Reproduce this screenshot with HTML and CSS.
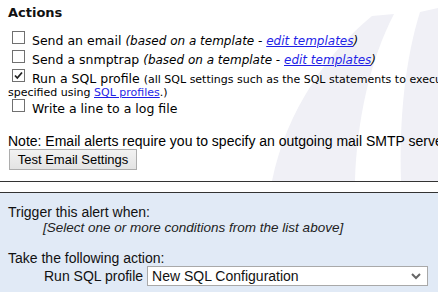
FILE: index.html
```html
<!DOCTYPE html>
<html lang="en">
<head>
    <meta charset="UTF-8">
    <title>Alert Actions</title>
    <link rel="stylesheet" href="styles.css">
</head>
<body>
    <div class="top">
        <svg class="watermark" width="438" height="181" viewBox="0 0 438 181">
            <path d="M372 16 C330 50 286 110 272 181 L355 181 C357 120 370 60 394 14 Z" fill="#f0f0f6"/>
            <path d="M420 12 C405 60 399 120 401 181 L438 181 L438 8 Z" fill="#f0f0f6"/>
        </svg>
        <div class="content">
            <h3 class="title">Actions</h3>
            <div class="opt"><span class="cb"></span> Send an email <em>(based on a template - <a href="#">edit templates</a>)</em></div>
            <div class="opt"><span class="cb"></span> Send a snmptrap <em>(based on a template - <a href="#">edit templates</a>)</em></div>
            <div class="opt opt-wrap"><span class="cb"><svg width="11" height="11" viewBox="0 0 11 11"><path d="M2 5.5 L4.3 8 L9 2.5" fill="none" stroke="#222" stroke-width="1.8"/></svg></span> Run a SQL profile <span class="small">(all SQL settings such as the SQL statements to execute are<br>specified using <a href="#">SQL profiles</a>.)</span></div>
            <div class="opt"><span class="cb"></span> Write a line to a log file</div>

            <p class="note">Note: Email alerts require you to specify an outgoing mail SMTP server in the settings.</p>
            <button class="btn">Test Email Settings</button>
        </div>
        <hr class="rule">
    </div>

    <div class="panel">
        <p class="label">Trigger this alert when:</p>
        <p class="hint">[Select one or more conditions from the list above]</p>
        <p class="label spaced">Take the following action:</p>
        <div class="action-row">
            <span>Run SQL profile</span>
            <div class="select">
                <span>New SQL Configuration</span>
                <svg width="10" height="8" viewBox="0 0 10 8"><path d="M1 2 L5 6 L9 2" fill="none" stroke="#666" stroke-width="2"/></svg>
            </div>
        </div>
    </div>
</body>
</html>
```
FILE: styles.css
```css
body {
    margin: 0;
    font-family: "DejaVu Sans", Verdana, sans-serif;
    font-size: 12.5px;
    color: #000;
    background: #fff;
    overflow: hidden;
    width: 438px;
    height: 292px;
}
.top {
    position: relative;
    height: 182px;
    overflow: hidden;
}
.watermark {
    position: absolute;
    left: 0;
    top: 0;
}
.content {
    position: relative;
    padding: 4px 8px 0 8px;
    white-space: nowrap;
}
.title {
    margin: 0 0 7px 0;
    font-size: 13px;
    line-height: 17px;
    font-weight: bold;
    color: #111;
}
.opt {
    line-height: 19px;
    height: 19px;
}
.opt-wrap {
    height: 30px;
    line-height: 12px;
}
.cb {
    display: inline-block;
    box-sizing: border-box;
    width: 13px;
    height: 13px;
    margin: 3px 3px 3px 4px;
    border: 1px solid #707070;
    background: #fff;
    vertical-align: -2px;
    position: relative;
}
.cb svg {
    position: absolute;
    left: 0;
    top: 0;
}
em {
    font-style: italic;
    font-size: 12px;
}
a {
    color: #1f1fe6;
}
.small {
    font-size: 11px;
}
.note {
    margin: 19px 0 0 0;
    font-family: "Liberation Sans", Arial, sans-serif;
    font-size: 14px;
    line-height: 15px;
}
.btn {
    font-family: "Liberation Sans", Arial, sans-serif;
    font-size: 13px;
    height: 21px;
    width: 128px;
    padding: 0;
    margin: 0 0 0 1px;
    border: 1px solid #adadad;
    background: linear-gradient(#f2f2f2, #e3e3e3);
    color: #000;
    display: block;
}
.rule {
    position: absolute;
    left: 0;
    right: 0;
    bottom: 0;
    margin: 0;
    border: 0;
    border-top: 1px solid #333;
}
.panel {
    margin-top: 10px;
    border-top: 1px solid #333;
    background: #e1eaf6;
    height: 100px;
    padding: 12px 8px 0 8px;
    font-family: "Liberation Sans", Arial, sans-serif;
    font-size: 14px;
    color: #111;
}
.panel p {
    margin: 0;
    line-height: 15px;
}
.hint {
    font-style: italic;
    font-size: 13.5px;
    padding-left: 35px;
    color: #222;
}
.spaced {
    margin-top: 16px !important;
}
.action-row {
    display: flex;
    align-items: center;
    padding-left: 36px;
    gap: 4px;
}
.select {
    display: flex;
    align-items: center;
    justify-content: space-between;
    box-sizing: border-box;
    width: 281px;
    height: 20px;
    padding: 0 6px 0 4px;
    background: #fff;
    border: 1px solid #a9a9a9;
}
```
